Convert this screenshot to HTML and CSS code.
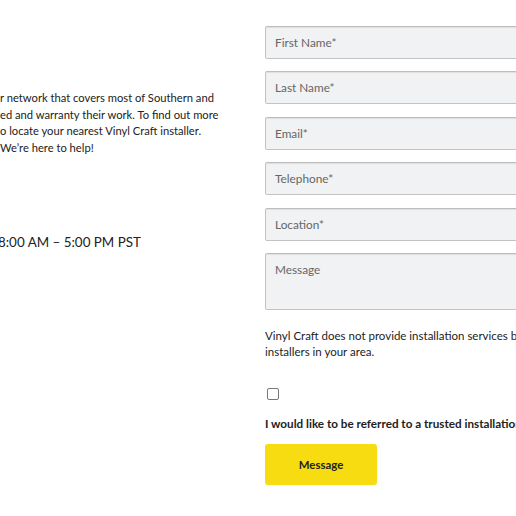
FILE: index.html
```html
<!DOCTYPE html>
<html>
<head>
<meta charset="utf-8">
<link rel="stylesheet" href="styles.css">
</head>
<body>
<div class="page">
  <div class="info">
    <p class="about">r network that covers most of Southern and<br>ed and warranty their work. To find out more<br>o locate your nearest Vinyl Craft installer.<br>We’re here to help!</p>
    <p class="hours">8:00 AM – 5:00 PM PST</p>
  </div>
  <form class="form">
    <div class="field">First Name*</div>
    <div class="field">Last Name*</div>
    <div class="field">Email*</div>
    <div class="field">Telephone*</div>
    <div class="field">Location*</div>
    <div class="field area">Message</div>
    <p class="note">Vinyl Craft does not provide installation services but can refer you to trusted<br>installers in your area.</p>
    <span class="check"></span>
    <p class="refer">I would like to be referred to a trusted installation professional</p>
    <button type="button" class="btn">Message</button>
  </form>
</div>
</body>
</html>
```
FILE: styles.css
```css
html, body {
  margin: 0;
  padding: 0;
  background: #fff;
  overflow: hidden;
}
body {
  font-family: Lato, "Open Sans", sans-serif;
  color: #222;
  width: 516px;
  height: 516px;
}
.page {
  display: grid;
  grid-template-columns: 265px 320px;
  width: 585px;
}
.info {
  padding-top: 90px;
}
.about {
  margin: 0;
  font-size: 11.2px;
  line-height: 16.6px;
  white-space: nowrap;
}
.hours {
  margin: 76px 0 0 -2px;
  font-size: 13.4px;
  line-height: 20px;
  white-space: nowrap;
}
.form {
  padding-top: 26px;
  display: flex;
  flex-direction: column;
  align-items: flex-start;
}
.field {
  box-sizing: border-box;
  width: 320px;
  height: 33px;
  margin-bottom: 12.4px;
  padding: 0 9px;
  background: #f1f2f3;
  border: 1px solid #c3c3c3;
  border-top-color: #bdbdbd;
  border-radius: 2px;
  box-shadow: inset 0 1px 1px rgba(0,0,0,0.08);
  color: #666;
  font-size: 11.8px;
  line-height: 31px;
}
.field.area {
  height: 57px;
  line-height: 16px;
  padding-top: 8px;
  margin-bottom: 18px;
}
.note {
  margin: 0;
  font-size: 11.5px;
  line-height: 16.5px;
  white-space: nowrap;
}
.check {
  display: block;
  box-sizing: border-box;
  width: 12px;
  height: 12px;
  margin: 27px 0 0 2px;
  border: 1px solid #777;
  border-radius: 2px;
  background: #fff;
}
.refer {
  margin: 15px 0 0 0;
  font-size: 11.7px;
  font-weight: 700;
  line-height: 16.5px;
  white-space: nowrap;
}
.btn {
  margin-top: 13px;
  width: 112px;
  height: 41px;
  border: none;
  border-radius: 3px;
  background: #f7dc11;
  color: #222;
  font-family: Lato, sans-serif;
  font-size: 11.4px;
  font-weight: 700;
  cursor: pointer;
}
```
